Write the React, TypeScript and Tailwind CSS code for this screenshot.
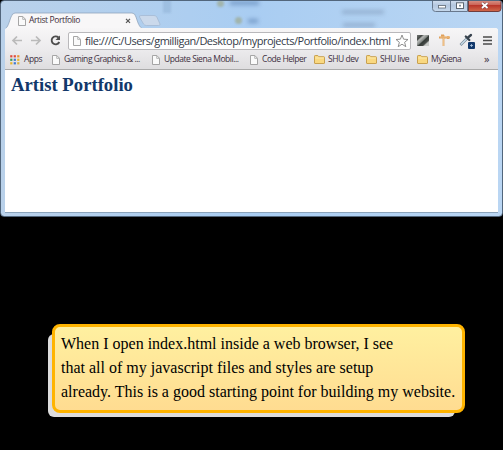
import React from "react";

function PageIcon({ className = "" }: { className?: string }) {
  return (
    <svg viewBox="0 0 8 10" className={`h-[10px] w-[8px] shrink-0 ${className}`}>
      <path d="M.5 .5h4.3l2.7 2.8v6.2h-7z" fill="#fafafa" stroke="#9c9c9c" strokeWidth=".9" />
      <path d="M4.7 .6v2.8h2.7" fill="none" stroke="#a8a8a8" strokeWidth=".8" />
    </svg>
  );
}

function FolderIcon() {
  return (
    <svg viewBox="0 0 11 9" className="h-[9px] w-[11px] shrink-0">
      <path d="M.5 8V1.2Q.5.5 1.2.5h2.6l1 1.2h5q.7 0 .7.7V8q0 .5-.6.5H1Q.5 8.500.5 8z" fill="#f9d880" stroke="#c49a45" strokeWidth=".9" />
      <path d="M1.2 3h8.600" stroke="#fff0b8" strokeWidth=".8" />
    </svg>
  );
}

const dots = ["#e04a3a", "#e04a3a", "#e8912c", "#3f9b58", "#3f79d0", "#e8b52c", "#e8b52c", "#3f79d0", "#d8b040"];

function AppsIcon() {
  return (
    <svg viewBox="0 0 10 10" className="h-[10px] w-[10px] shrink-0">
      {dots.map((c, i) => (
        <rect key={i} x={(i % 3) * 3.5 + 0.2} y={Math.floor(i / 3) * 3.5 + 0.2} width="2.200" height="2.200" fill={c} />
      ))}
    </svg>
  );
}

function TabStrip() {
  return (
    <div className="relative h-[28px] overflow-hidden">
      <div className="absolute left-[163px] top-0 h-[13px] w-[8px] bg-[#789bc1]/30 blur-[1px]" />
      <div className="absolute left-[217px] top-0 h-[7px] w-[7px] rounded-full bg-[#9a9b68]/50 blur-[1px]" />
      <div className="absolute left-[230px] top-[1px] h-[4px] w-[29px] bg-[#577cae]/60 blur-[2px]" />
      <div className="absolute left-[235px] top-[17px] h-[7px] w-[7px] rounded-full bg-[#9a9b68]/50 blur-[1px]" />
      <div className="absolute left-[248px] top-[19px] h-[4px] w-[10px] bg-[#577cae]/60 blur-[2px]" />
      <div className="absolute left-[342px] top-[10px] h-[4px] w-[42px] bg-[#7790b0]/50 blur-[2px]" />
      <div className="absolute left-[343px] top-[23px] h-[4px] w-[32px] bg-[#7790b0]/50 blur-[2px]" />
      <svg viewBox="0 0 503 28" className="absolute inset-0 h-[28px] w-[503px]">
        <path d="M4.500 29C8 28 9 22 11 17q1.300-4 4-4h117q3 0 4 4c2 6 3 10 7 12z" fill="#f8f7f8" stroke="#8fa4bd" strokeWidth=".8" />
        <path d="M139.500 17q-.5-1.500 1.500-1.500h13q2 0 2.800 1.500l3.200 7q.5 1.500-1.500 1.500h-12q-2 0-3-1.500z" fill="#cbd9eb" stroke="#a5bad3" strokeWidth=".8" />
        <path d="M126 18.800l4 4m0-4l-4 4" stroke="#555" strokeWidth="1.200" />
      </svg>
      <div className="absolute left-[18px] top-[14px] flex h-[13px] items-center">
        <PageIcon />
        <span className="ml-[3px] whitespace-nowrap text-[8.500px] tracking-[-0.400px] text-[#402d3c]">Artist Portfolio</span>
      </div>
      <svg viewBox="0 0 70 12" className="absolute left-[432px] top-0 h-[12px] w-[70px]">
        <defs>
          <linearGradient id="close" x2="0" y2="1">
            <stop stopColor="#dca296" /><stop offset=".45" stopColor="#cc6659" /><stop offset=".5" stopColor="#b93429" /><stop offset="1" stopColor="#d16b4c" />
          </linearGradient>
          <linearGradient id="plain" x2="0" y2="1">
            <stop stopColor="#dce7f4" /><stop offset=".5" stopColor="#b4c7df" /><stop offset="1" stopColor="#c6d9ed" />
          </linearGradient>
        </defs>
        <path d="M.5-1v9.500q0 3 3 3h32V-1z" fill="url(#plain)" stroke="#68788d" />
        <path d="M36.500-1v12.500H66q3 0 3-3V-1z" fill="url(#close)" stroke="#713d3c" />
        <path d="M18.500 0v11" stroke="#68788d" />
        <rect x="6.500" y="5.500" width="7" height="2.500" fill="#fff" stroke="#5e6873" strokeWidth=".8" />
        <rect x="24.500" y="2.800" width="7" height="5.700" fill="#fff" stroke="#5e6873" />
        <rect x="27" y="4.800" width="2" height="1.700" fill="#7c8c9c" />
        <path d="M50 3l5.500 5M55.500 3L50 8" stroke="#704448" strokeWidth="3" />
        <path d="M50 3l5.500 5M55.500 3L50 8" stroke="#fff" strokeWidth="1.800" />
      </svg>
    </div>
  );
}

function Toolbar() {
  return (
    <div className="flex h-[23px] items-center bg-gradient-to-b from-[#f7f6f7] to-[#ebeaec]">
      <svg viewBox="0 0 63 23" className="h-[23px] w-[63px] shrink-0">
        <path d="M17 12.500H8m4-4l-4 4 4 4M26 12.500h9m-4-4l4 4-4 4" fill="none" stroke="#bababa" strokeWidth="1.700" />
        <path d="M53.500 9.500a4 4 0 1 0 .8 4.500" fill="none" stroke="#4d4d4d" strokeWidth="1.800" />
        <path d="M55 7.500v4.500h-4.500z" fill="#4d4d4d" />
      </svg>
      <div className="mt-[2px] flex h-[18px] w-[343px] shrink-0 items-center rounded-[2px] border border-[#b9b8bb] bg-white pl-[4px]">
        <PageIcon />
        <span className="ml-[4px] w-[310px] shrink-0 whitespace-nowrap text-[11px] leading-[16px] tracking-[-0.490px] text-[#333b48]">file:///C:/Users/gmilligan/Desktop/myprojects/Portfolio/index.html</span>
        <svg viewBox="0 0 14 14" className="h-[14px] w-[14px] shrink-0">
          <path d="M7 1l1.600 4.200 4.400.3-3.400 2.800 1.200 4.400L7 10.200l-3.800 2.500 1.200-4.400L1 5.500l4.400-.3z" fill="#fff" stroke="#858585" strokeWidth=".9" />
        </svg>
      </div>
      <svg viewBox="0 0 87 23" className="h-[23px] w-[87px] shrink-0">
        <defs>
          <linearGradient id="stripe" x2="1" y2="1">
            <stop stopColor="#747875" /><stop offset=".22" stopColor="#444846" /><stop offset=".32" stopColor="#b8bab8" /><stop offset=".48" stopColor="#858a87" /><stop offset=".55" stopColor="#343a37" /><stop offset=".72" stopColor="#474b48" /><stop offset=".8" stopColor="#c9cbc9" />
          </linearGradient>
        </defs>
        <rect x="6" y="7" width="12" height="11" fill="url(#stripe)" />
        <path d="M28 9.500h11M32.500 7v11M37 8v3M30 7.500h3" fill="none" stroke="#dfa05b" strokeWidth="1.800" />
        <path d="M29 9h10M32.500 10v8" stroke="#f6ce98" strokeWidth=".7" />
        <path d="M49.500 17l7-7" stroke="#7b8c9b" strokeWidth="2.600" />
        <path d="M50 16.500l6-6" stroke="#cbe0eb" strokeWidth="1.200" />
        <path d="M54.800 8.500l3.500 3.500M57 9.500l3-2.500" stroke="#38434e" strokeWidth="2.300" strokeLinecap="round" />
        <rect x="57" y="14" width="7" height="7" rx="1" fill="#12386b" />
        <path d="M60.500 16v3M59 17.500h3" stroke="#adc5de" strokeWidth=".8" />
        <path d="M72 9h9M72 12.500h9M72 16h9" stroke="#4b4b4b" strokeWidth="1.700" />
      </svg>
    </div>
  );
}

const bookmarks = [
  { label: "Gaming Graphics & ...", kind: "page", width: "w-[100px]" },
  { label: "Update Siena Mobil...", kind: "page", width: "w-[98px]" },
  { label: "Code Helper", kind: "page", width: "w-[64px]" },
  { label: "SHU dev", kind: "folder", width: "w-[52px]" },
  { label: "SHU live", kind: "folder", width: "w-[51px]" },
  { label: "MySiena", kind: "folder", width: "w-[67px]" },
];

function Bookmarks() {
  return (
    <div className="flex h-[17px] items-center bg-gradient-to-b from-[#ebeaec] to-[#dfdee0] pl-[5px] text-[8.500px] tracking-[-0.450px] text-[#40303f]">
      <div className="flex w-[42px] shrink-0 items-center gap-[4px]"><AppsIcon />Apps</div>
      {bookmarks.map((b) => (
        <div key={b.label} className={`flex shrink-0 items-center whitespace-nowrap ${b.width} ${b.kind === "page" ? "gap-[4px]" : "gap-[3px]"}`}>
          {b.kind === "page" ? <PageIcon /> : <FolderIcon />}<span>{b.label}</span>
        </div>
      ))}
      <span className="text-[11px]">»</span>
    </div>
  );
}

export default function App() {
  return (
    <main className="h-[450px] w-[503px] overflow-hidden bg-black font-['Open_Sans',sans-serif]">
      <section className="h-[217px] overflow-hidden rounded-[4px] border border-[#52667c] bg-gradient-to-r from-[#b9d1ea] via-[#a9cdf2] to-[#bad6f3]">
        <div className="-ml-px -mt-px w-[503px]"><TabStrip /></div>
        <div className="mx-[4px] h-[185px] overflow-hidden rounded-t-[3px] border-b border-[#8ba3ba] bg-white">
          <Toolbar />
          <Bookmarks />
          <div className="h-[2px] border-b border-[#aaa] bg-[#dfdee0]" />
          <h1 className="pl-[6px] pt-[4px] font-['Liberation_Serif',serif] text-[18.700px] font-bold leading-[22px] text-[#12386b]">Artist Portfolio</h1>
        </div>
      </section>
      <section className="ml-[52px] mt-[107px] w-[413px]">
        <div className="relative">
          <div className="absolute -left-[4px] top-[10px] h-[83px] w-[407px] rounded-[6px] bg-[#ddd]" />
          <p className="relative h-[89px] whitespace-pre rounded-[8px] border-[3px] border-[#ffb400] bg-gradient-to-b from-[#fff0a0] to-[#ffdc91] pl-[6px] pt-[5px] font-['Liberation_Serif',serif] text-[16px] leading-[24px] text-black">{`When I open index.html inside a web browser, I see
that all of my javascript files and styles are setup
already. This is a good starting point for building my website.`}</p>
        </div>
      </section>
    </main>
  );
}
